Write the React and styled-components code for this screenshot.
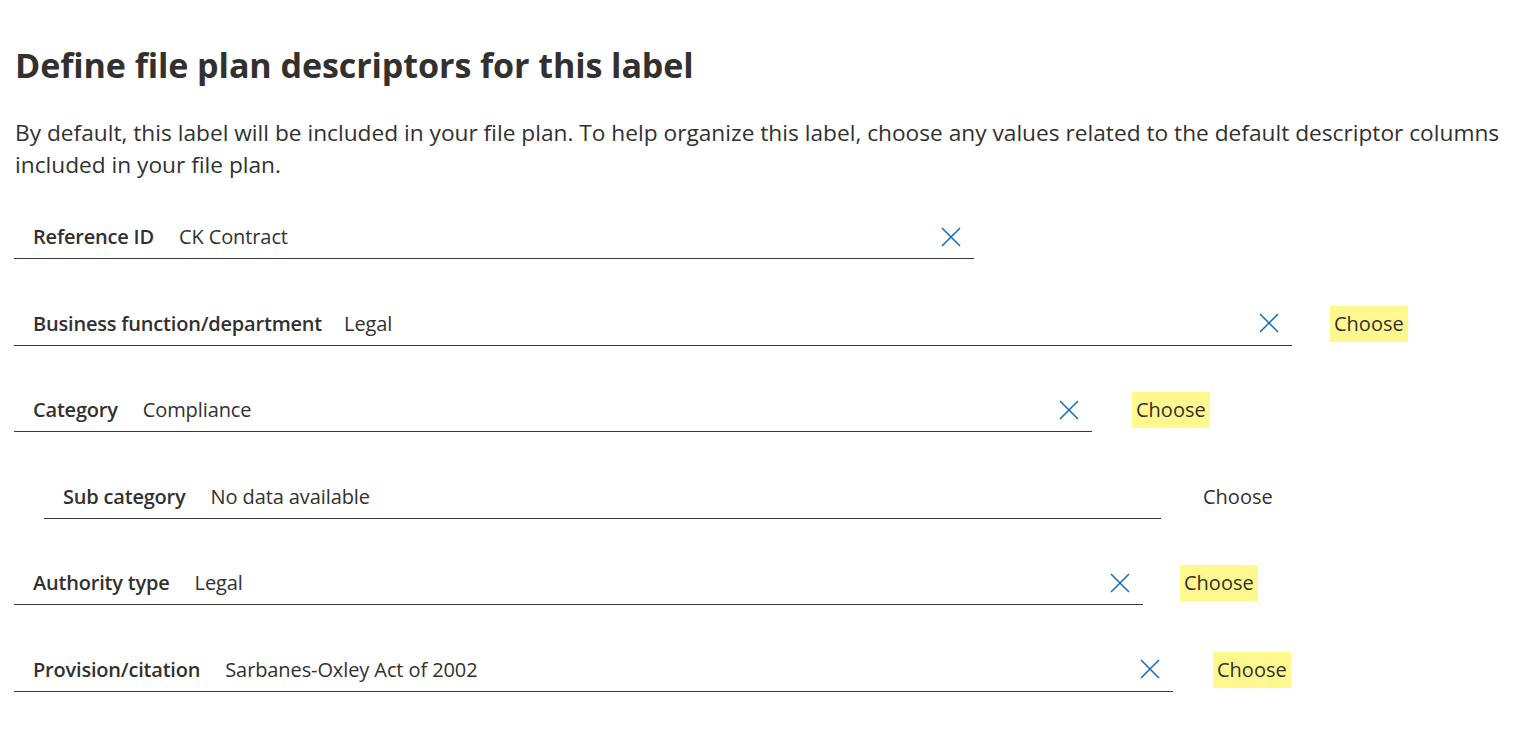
import React from "react";
import styled, { createGlobalStyle } from "styled-components";

const GlobalStyle = createGlobalStyle`
  body {
    margin: 0;
    background: #fff;
    color: #323130;
    font-family: "Segoe UI", "Open Sans", "Noto Sans", sans-serif;
  }
`;

const Page = styled.div`
  padding: 37px 14px 40px 14px;
`;

const Title = styled.h1`
  margin: 0 0 0 1px;
  font-size: 34.1px;
  font-weight: 700;
  line-height: 56px;
  letter-spacing: -0.1px;
`;

const Intro = styled.p`
  margin: 24px 0 34px 1px;
  font-size: 22.7px;
  line-height: 32px;
  max-width: 1510px;
`;

const Fields = styled.div`
  display: flex;
  flex-direction: column;
  gap: 42.5px;
`;

const Row = styled.div`
  display: flex;
  align-items: center;
  gap: ${(p) => p.$gap}px;
  padding-left: ${(p) => (p.$indent ? 30 : 0)}px;
`;

const Field = styled.div`
  display: flex;
  align-items: center;
  width: ${(p) => p.$width}px;
  height: 44px;
  padding-left: 19px;
  box-sizing: border-box;
  border-bottom: 1px solid #3b3a39;
  font-size: 20px;
`;

const Label = styled.span`
  font-weight: 600;
  letter-spacing: -0.2px;
  margin-right: ${(p) => p.$space}px;
`;

const Value = styled.span`
  flex: 1;
  font-weight: 400;
  letter-spacing: -0.1px;
`;

const Clear = styled.button`
  display: flex;
  align-items: center;
  justify-content: center;
  width: 24px;
  height: 24px;
  margin-right: 11px;
  padding: 0;
  border: none;
  background: transparent;
  color: #0f6cbd;
  cursor: pointer;
`;

const Choose = styled.span`
  display: inline-block;
  padding: 3px 4px;
  font-size: 20px;
  line-height: 30px;
  background: ${(p) => (p.$highlight ? "#fff88f" : "transparent")};
`;

const ClearIcon = () => (
  <svg width="20" height="20" viewBox="0 0 20 20">
    <path d="M1 1 L19 19 M19 1 L1 19" stroke="currentColor" strokeWidth="1.5" fill="none" />
  </svg>
);

const fields = [
  { label: "Reference ID", value: "CK Contract", width: 960, clear: true },
  { label: "Business function/department", value: "Legal", width: 1278, clear: true, choose: true, hl: true, gap: 38 },
  { label: "Category", value: "Compliance", width: 1078, clear: true, choose: true, hl: true, gap: 40 },
  { label: "Sub category", value: "No data available", width: 1117, indent: true, choose: true, gap: 38 },
  { label: "Authority type", value: "Legal", width: 1129, clear: true, choose: true, hl: true, gap: 37 },
  { label: "Provision/citation", value: "Sarbanes-Oxley Act of 2002", width: 1159, clear: true, choose: true, hl: true, gap: 40 },
];

export default function App() {
  return (
    <>
      <GlobalStyle />
      <Page>
        <Title>Define file plan descriptors for this label</Title>
        <Intro>
          By default, this label will be included in your file plan. To help organize this label, choose any
          values related to the default descriptor columns included in your file plan.
        </Intro>
        <Fields>
          {fields.map((f) => (
            <Row key={f.label} $indent={f.indent} $gap={f.gap || 0}>
              <Field $width={f.width}>
                <Label $space={f.label.length > 20 ? 22 : 25}>{f.label}</Label>
                <Value>{f.value}</Value>
                {f.clear && (
                  <Clear aria-label="Clear">
                    <ClearIcon />
                  </Clear>
                )}
              </Field>
              {f.choose && <Choose $highlight={f.hl}>Choose</Choose>}
            </Row>
          ))}
        </Fields>
      </Page>
    </>
  );
}
